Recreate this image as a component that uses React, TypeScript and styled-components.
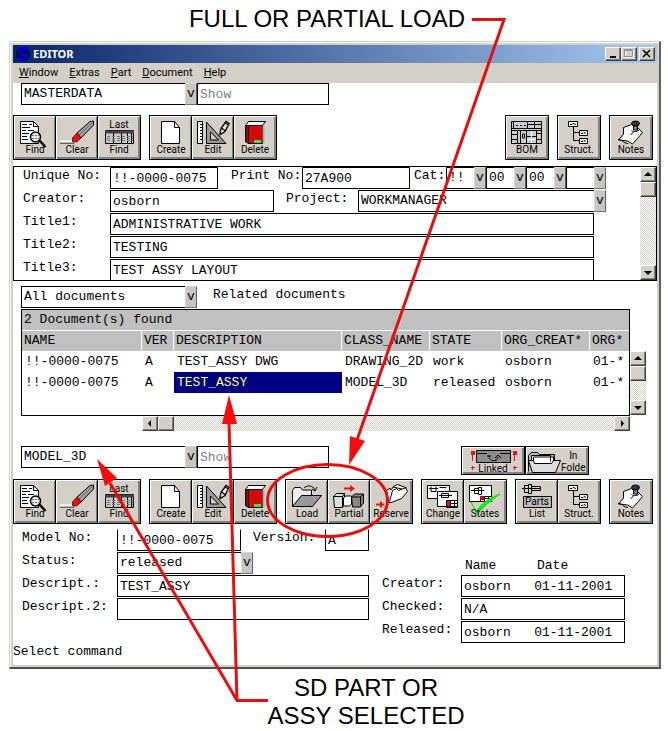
import React, { useId } from 'react';
import styled, { createGlobalStyle, css } from 'styled-components';

const face = '#d4d0c8';
const mono = '"Liberation Mono", "Courier New", monospace';
const ui = 'Roboto, Tahoma, sans-serif';

const GlobalStyle = createGlobalStyle`
  * { box-sizing: border-box; }
  body { margin: 0; background: #fff; color: #000; font: 13px/16px ${mono}; }
  button, input, select { margin: 0; padding: 0; font: inherit; color: inherit; border-radius: 0; }
`;

const Page = styled.main`
  position: relative;
  padding: 0 7px 0 9px;
`;

const Callout = styled.h1<{ $foot?: boolean }>`
  margin: 0;
  padding: ${(p) => (p.$foot ? '5px 0 0 62px' : '5px 16px 8px 0')};
  font: 24px/28px "Liberation Sans", Arial, sans-serif;
  text-align: center;
`;

const Frame = styled.section`
  border: 1px solid ${face};
  border-right: 2px solid #606060;
  border-bottom: 2px solid #505050;
  box-shadow: inset 1px 1px 0 #fff;
  padding: 3px 2px 2px 3px;
  background: ${face};
`;

const TitleBar = styled.header`
  display: flex;
  align-items: center;
  height: 18px;
  padding: 0 2px 0 3px;
  background: linear-gradient(90deg, #0a246a, #a6caf0);
`;

const Title = styled.h2`
  flex: 1;
  margin: 0 0 0 3px;
  color: #fff;
  font: bold 11px/16px "Noto Sans", Tahoma, sans-serif;
`;

const bevel = css`
  background: ${face};
  border: 1px solid;
  border-color: #fff #404040 #404040 #fff;
  box-shadow: inset -1px -1px 0 #808080;
`;

const CaptionButton = styled.button<{ $apart?: boolean }>`
  ${bevel}
  display: flex;
  width: 16px;
  height: 14px;
  margin-left: ${(p) => (p.$apart ? 2 : 0)}px;
`;

const MenuBar = styled.nav`
  display: flex;
  gap: 11px;
  height: 20px;
  padding-left: 6px;
`;

const MenuItem = styled.button`
  border: 0;
  background: none;
  font: 11px/20px ${ui};
  &::first-letter { text-decoration: underline; }
`;

const Client = styled.div`
  background: #fff;
  padding-bottom: 5px;
`;

const Bar = styled.div<{ $top?: number }>`
  display: flex;
  align-items: flex-start;
  padding-left: 8px;
  margin-top: ${(p) => p.$top ?? 0}px;
`;

const fieldBox = css`
  height: 22px;
  border: 1px solid #000;
  background: #fff;
  padding: 0 0 0 2px;
  outline-offset: -2px;
`;

const Field = styled.input<{ $w?: number; $end?: number; $openTop?: boolean }>`
  ${fieldBox}
  min-width: 0;
  ${(p) => (p.$w ? `width: ${p.$w}px;` : 'flex: 1;')}
  margin-right: ${(p) => p.$end ?? 0}px;
  ${(p) => p.$openTop && 'border-top-color: transparent;'}
  &::placeholder { color: #808080; opacity: 1; }
`;

const ComboWrap = styled.span<{ $w?: number }>`
  display: grid;
  ${(p) => (p.$w ? `width: ${p.$w}px;` : 'flex: 1;')}
`;

const ComboSelect = styled.select`
  ${fieldBox}
  grid-area: 1 / 1;
  width: 100%;
  appearance: none;
`;

const ComboMark = styled.span`
  grid-area: 1 / 1;
  justify-self: end;
  width: 12px;
  height: 22px;
  background: #c8c6c0;
  border: 1px solid;
  border-color: #d8d8d8 #606060 #707070 #d8d8d8;
  text-align: center;
  line-height: 19px;
  pointer-events: none;
`;

function Combo({ value, label, w, id }: { value: string; label?: string; w?: number; id?: string }) {
  return (
    <ComboWrap $w={w}>
      <ComboSelect id={id} aria-label={label} defaultValue={value}>
        <option>{value}</option>
      </ComboSelect>
      <ComboMark aria-hidden>v</ComboMark>
    </ComboWrap>
  );
}

const Toolbar = styled.div<{ $top: number }>`
  display: flex;
  gap: 8px;
  margin-top: ${(p) => p.$top}px;
  padding-right: 4px;
`;

const Group = styled.div<{ $push?: boolean }>`
  display: flex;
  margin-left: ${(p) => (p.$push ? 'auto' : '0')};
`;

const ToolButton = styled.button<{ $wide?: boolean; $row?: boolean }>`
  display: flex;
  flex: none;
  flex-direction: ${(p) => (p.$row ? 'row' : 'column')};
  align-items: center;
  width: ${(p) => (p.$wide ? 64 : 44)}px;
  height: ${(p) => (p.$wide ? 29 : 45)}px;
  padding: ${(p) => (p.$wide ? 1 : 3)}px 1px 0;
  overflow: hidden;
  border: 1px solid #000;
  background: ${face};
  box-shadow: inset 1px 1px 0 #fff, inset -2px -2px 0 #808080;
  font: 10px/12px ${ui};
  &:not(:first-child) { margin-left: ${(p) => (p.$wide ? 0 : -2)}px; }
  svg { flex: none; overflow: visible; }
`;

const Glyph = ({ children, w = 40, h = 25 }: { children: React.ReactNode; w?: number; h?: number }) => (
  <svg width={w} height={h} viewBox={`0 0 ${w} ${h}`} fill="none" stroke="#000" strokeWidth="1" aria-hidden>
    {children}
  </svg>
);

const SmallText = styled.text`
  font: 10px ${ui};
  fill: #000;
  stroke: none;
  text-anchor: middle;
`;

const icons: Record<string, React.ReactNode> = {
  Find: (
    <>
      <path d="M5.500 2.500h13l5 5v17h-18z" fill="#fff" />
      <path d="M18.500 2.500v5h5" />
      <path d="M7 5.500h5m2 0h3M7 8.500h8M7 11.500h4m2 0h6M7 14.500h7M7 17.500h5M7 20.500h6" />
      <circle cx="20.500" cy="18" r="5" fill="#e8e8e8" strokeWidth="1.500" />
      <path d="M17 16.500h7m-7 3h7" stroke="#777" strokeDasharray="2 1" />
      <path d="M24.500 21.500l6 6.500" strokeWidth="2.500" />
    </>
  ),
  Clear: (
    <>
      <path d="M3 24h14" />
      <path d="M3 22.500h13" stroke="#fff" strokeWidth="2" />
      <path d="M20 14l13-11.500 3.500-.500v4L24 19z" fill="#a0a0a0" />
      <path d="M22 16L35 4" stroke="#666" />
      <path d="M15.500 19l4.500-5 4 5-4.500 4-4-.500z" fill="#e8120c" stroke="#7a1010" />
    </>
  ),
  'Last Find': (
    <>
      <SmallText x="20" y="9">Last</SmallText>
      <path d="M6.500 11.500h28v13h-28z" fill="#c8c8c8" />
      <path d="M6 13h29" stroke="#444" strokeWidth="3" />
      <path d="M14.500 14v10M22.500 14v10M28.500 14v10M32.500 14v10" />
      <path d="M8 17.500h26M8 19.500h26M8 21.500h26" strokeDasharray="3 2" stroke="#777" />
    </>
  ),
  Create: (
    <>
      <path d="M10.500 2.500h13l5 6v16h-18z" fill="#fff" />
      <path d="M23.500 2.500v6h5" />
    </>
  ),
  Edit: (
    <>
      <path d="M4.500 2.500h5v22h-5z" fill="#fff" />
      <path d="M7 5.500h3M7 8.500h3M7 11.500h3M7 14.500h3M7 17.500h3M7 20.500h3" />
      <path d="M13.500 3v21.500h19.500zM17.500 13v8h8z" fill="#999" fillRule="evenodd" />
      <path d="M27 14.500l1-5 5-7 3 2-4 8-5 3zM28.500 9l4 3M32 4l3.500 2" fill="#eee" strokeWidth="1.300" />
    </>
  ),
  Delete: (
    <>
      <path d="M10.500 6.500l3-4h17l-3 4z" fill="#fff" />
      <path d="M10.500 6.500h3v18l-3-2z" fill="#8a0d0d" />
      <path d="M13.500 6.500h14v18h-14z" fill="#d40a0a" />
      <path d="M28.500 7v17" stroke="#aaa" strokeWidth="2" />
      <path d="M19 22.500h7" stroke="#45e045" strokeWidth="3" />
    </>
  ),
  BOM: (
    <>
      <path d="M4.500 2.500h30v22h-30z" fill="#ccc" />
      <path d="M6.500 2v7.500M20.500 2v7.500M4 9.500h31M4 11.500h31M27.500 2v7.500M21 5.500h14M10.500 11v14M4 15.500h6M4 20.500h6M13.500 11v14M19.500 11v14M29.500 11v14M19 17.500h10M30 14.500h5M30 20.500h5" />
      <path d="M15.500 15h2v4h-2z" />
      <path d="M24.500 12v12M20 20.500h9" stroke="#fff" />
      <path d="M9 6.500h10" strokeDasharray="2 2" />
    </>
  ),
  'Struct.': (
    <>
      <path d="M14.500 8v13.500h6M14.500 13.500h6" />
      <path d="M9.500 2.500h9v5h-9zM20.500 11.500h8v5h-8zM20.500 19.500h8v5h-8z" fill="#fff" />
      <path d="M11 5.500h2l1-1 3 1M22 14.500h2l1-1 2 1M22 22.500h2l1-1 2 1" />
    </>
  ),
  Notes: (
    <>
      <path d="M12.500 8.500l8-3 5 2 6 6-5 6-5 5.500-5-3-9-1 5-6z" fill="#fff" />
      <path d="M7 20.500c4-1 5 4 10 4" />
      <ellipse cx="24.500" cy="4.500" rx="4" ry="2.500" fill="#333" />
      <path d="M22.500 7h4v4h-4z" fill="#888" />
      <path d="M20.500 11.500c2 2 7 1 8-1M22.500 13l-3 3" />
    </>
  ),
  Load: (
    <>
      <path d="M5.500 23.500v-16l2-3h6l2 2.500h9v5" fill="#eee" />
      <path d="M5.500 23.500l9-11h20l-9 11z" fill="#999" />
      <path d="M17 5c3-3 9-3 11 2m-3-1l3 2 2-4" />
    </>
  ),
  Partial: (
    <>
      <path d="M15 4.500h6v-2.500l5 3.500-5 3.500v-2.500h-6z" fill="#e8120c" stroke="none" />
      <path d="M4.500 13.500l3-3h8v9l-2 5h-8zM4.500 13.500h9v11M13.500 13.500l2-3" fill="#ddd" />
      <path d="M14.500 15l2-2h6v8l-2 2h-6z" fill="#fff" />
      <path d="M22.500 14l3-3h9v9l-3 4h-8zM22.500 14h9v10M31.500 14l3-3" fill="#888" />
    </>
  ),
  Reserve: (
    <>
      <path d="M17.500 19.500l-2-12 3-2 2 1 2-3 4-2 8 3 2 4-6 7-10 4z" fill="#fff" />
      <path d="M18.500 18.500l3-11 4-2 2 2 8-3M20 7l-2-2M22 4l9 2" />
      <path d="M5 21.500h8m-3-3v6" stroke="#e8120c" strokeWidth="2" />
    </>
  ),
  Change: (
    <>
      <path d="M4.500 2.500h22v13h-22z" fill="#fff" />
      <path d="M6 5.500h9m-7-2v5h5v-5M16.500 4.500h7" />
      <path d="M14.500 8.500h20v15h-20z" fill="#fff" />
      <path d="M16 12.500h13M18.500 10.500h7v4h-7z" />
      <path d="M23.500 17.500h11v7h-11zM27.500 17v7M31.500 17v7M23 20.500h11" />
      <path d="M24 18h3v5h-3z" fill="#e8120c" stroke="none" />
    </>
  ),
  States: (
    <>
      <path d="M4.500 2.500h22v16h-22z" fill="#fff" />
      <path d="M6 7.500h13M9.500 5.500h4v5h-4zM13.500 4.500h3v7h-3zM15.500 13.500h11v5h-11zM19.500 13v5M23.500 13v5M15 15.500h11" />
      <path d="M15 13h4v4h-4z" fill="#c01010" stroke="none" />
      <path d="M6 19l5 9Q20 16 35 11Q22 20 12 31z" fill="#19e619" stroke="#19e619" />
    </>
  ),
  'List|Parts': (
    <>
      <path d="M5 5.500h19M7.500 2.500h4v7h-4zM11.500 1.500h3v9h-3zM14.500 3.500h9v4h-9z" />
      <path d="M6.500 13.500h28v11h-28z" fill="#bbb" />
      <SmallText x="20" y="22">Parts</SmallText>
    </>
  ),
};

function Tool({ name }: { name: string }) {
  const label = name === 'Last Find' ? 'Find' : name.split('|')[0];
  return (
    <ToolButton type="button">
      <Glyph>{icons[name]}</Glyph>
      {label}
    </ToolButton>
  );
}

const Tools = ({ names, push }: { names: string[]; push?: boolean }) => (
  <Group $push={push}>
    {names.map((n) => (
      <Tool key={n} name={n} />
    ))}
  </Group>
);

const FolderText = styled.span`
  display: grid;
  grid-auto-rows: 12px;
  justify-items: center;
  padding-top: 1px;
`;

const Pane = styled.form`
  display: flex;
  height: 115px;
  margin-top: 6px;
  overflow: hidden;
  border: 1px solid #000;
`;

const PaneRows = styled.div`
  flex: 1;
  display: grid;
  grid-auto-rows: 22px;
  gap: 1px;
  padding: 0 34px 0 9px;
`;

const Row = styled.div`
  display: flex;
`;

const Label = styled.label<{ $w: number; $start?: number }>`
  flex: none;
  width: ${(p) => p.$w}px;
  margin-left: ${(p) => p.$start ?? 0}px;
  line-height: 17px;
  white-space: nowrap;
`;

interface FieldProps {
  label: string;
  value: string;
  lw: number;
  start?: number;
  w?: number;
  end?: number;
  openTop?: boolean;
}

function Labeled({ label, value, lw, start, w, end, openTop }: FieldProps) {
  const id = useId();
  return (
    <>
      <Label htmlFor={id} $w={lw} $start={start}>{label}</Label>
      <Field id={id} defaultValue={value} $w={w} $end={end} $openTop={openTop} />
    </>
  );
}

const ScrollTrack = styled.div<{ $across?: boolean }>`
  display: flex;
  flex-direction: ${(p) => (p.$across ? 'row' : 'column')};
  ${(p) => (p.$across ? 'height: 15px; margin: 0 16px 0 121px;' : 'width: 16px;')}
  background: repeating-conic-gradient(${face} 0 25%, #fff 0 50%) 0 0 / 2px 2px;
`;

const ScrollButton = styled.button<{ $last?: boolean }>`
  ${bevel}
  display: flex;
  flex: none;
  align-items: center;
  justify-content: center;
  width: 16px;
  height: 15px;
  ${(p) => p.$last && 'margin: auto 0 0 auto;'}
`;

const arrows = { up: 'M0 5l4-4 4 4z', down: 'M0 2l4 4 4-4z', left: 'M5 0v7l-3-3.500z', right: 'M3 0v7l3-3.500z' };

const Arrow = ({ dir }: { dir: keyof typeof arrows }) => (
  <svg width="8" height="7" aria-hidden>
    <path d={arrows[dir]} />
  </svg>
);

function Scroller({ across }: { across?: boolean }) {
  return (
    <ScrollTrack $across={across}>
      <ScrollButton type="button" aria-label={across ? 'Scroll left' : 'Scroll up'}>
        <Arrow dir={across ? 'left' : 'up'} />
      </ScrollButton>
      <ScrollButton type="button" aria-label="Scroll position" />
      <ScrollButton type="button" $last aria-label={across ? 'Scroll right' : 'Scroll down'}>
        <Arrow dir={across ? 'right' : 'down'} />
      </ScrollButton>
    </ScrollTrack>
  );
}

const Results = styled.div`
  margin-top: 1px;
  padding: 0 11px 0 8px;
`;

const ResultsTop = styled.div`
  display: flex;
`;

const ListBox = styled.div`
  flex: 1;
  min-width: 0;
  height: 107px;
  overflow: hidden;
  border: 1px solid #000;
`;

const SideScroll = styled.div`
  display: flex;
  padding: 42px 0 1px;
`;

const Table = styled.table`
  width: 100%;
  table-layout: fixed;
  border-collapse: separate;
  border-spacing: 0;
  white-space: nowrap;
  text-align: left;
  caption { height: 21px; padding: 2px; background: #c0c0c0; border-bottom: 1px solid #fff; text-align: left; }
  th { height: 20px; padding: 0 0 0 2px; background: #c0c0c0; border-right: 1px solid #fff; font-weight: normal; }
  th:last-child { border-right: 0; }
`;

const Col = styled.col<{ $w?: number }>`
  ${(p) => p.$w && `width: ${p.$w}px;`}
`;

const Cell = styled.td<{ $on: boolean }>`
  height: 21px;
  padding: 1px 0 0 3px;
  ${(p) => p.$on && 'background: #000080; color: #ffff80;'}
`;

const docs = [
  ['!!-0000-0075', 'A', 'TEST_ASSY DWG', 'DRAWING_2D', 'work', 'osborn', '01-*'],
  ['!!-0000-0075', 'A', 'TEST_ASSY', 'MODEL_3D', 'released', 'osborn', '01-*'],
];

const ModelBar = styled(Bar)`
  margin-top: 15px;
  padding-right: 68px;
`;

const Details = styled.form`
  display: flex;
  gap: 13px;
  margin-top: 5px;
  padding-left: 9px;
`;

const Stack = styled.div<{ $w: number; $top?: number }>`
  display: grid;
  grid-template-columns: minmax(0, 1fr);
  grid-auto-rows: 22px;
  align-content: start;
  gap: 1px;
  width: ${(p) => p.$w}px;
  padding-top: ${(p) => p.$top ?? 0}px;
`;

const Heads = styled.div`
  display: grid;
  grid-template-columns: 72px 1fr;
  padding: 6px 0 0 83px;
`;

const Prompt = styled.output`
  display: block;
  padding-top: 1px;
`;

const Overlay = styled.svg`
  position: absolute;
  left: 0;
  top: 0;
  pointer-events: none;
`;

export default function App() {
  const statusId = useId();
  const projectId = useId();
  return (
    <Page>
      <GlobalStyle />
      <Callout>FULL OR PARTIAL LOAD</Callout>
      <Frame>
        <TitleBar>
          <svg width="14" height="16" aria-hidden>
            <ellipse cx="7" cy="8" rx="7" ry="7" fill="#04083c" />
            <path d="M12 3C7 1 2 4 4 7s8 1 7 4-6 3-9 1" fill="none" stroke="#0000d8" strokeWidth="3" />
          </svg>
          <Title>EDITOR</Title>
          <CaptionButton type="button" aria-label="Minimize">
            <svg width="14" height="12" aria-hidden><path d="M4 8h6v2H4z" /></svg>
          </CaptionButton>
          <CaptionButton type="button" aria-label="Maximize">
            <svg width="14" height="12" fill="none" aria-hidden>
              <path d="M3.500 2.500h8v7h-8z" stroke="#fff" />
              <path d="M2.500 1.500h8v7h-8zM2 2.500h9" stroke="#909090" />
            </svg>
          </CaptionButton>
          <CaptionButton type="button" $apart aria-label="Close">
            <svg width="14" height="12" aria-hidden><path d="M3 2l7 7M10 2l-7 7" stroke="#000" strokeWidth="1.500" /></svg>
          </CaptionButton>
        </TitleBar>
        <MenuBar>
          {['Window', 'Extras', 'Part', 'Document', 'Help'].map((m) => (
            <MenuItem key={m} type="button">{m}</MenuItem>
          ))}
        </MenuBar>
        <Client>
          <Bar>
            <Combo value="MASTERDATA" label="Data class" w={176} />
            <Field $w={132} placeholder="Show" aria-label="Show master data" />
          </Bar>
          <Toolbar $top={10}>
            <Tools names={['Find', 'Clear', 'Last Find']} />
            <Tools names={['Create', 'Edit', 'Delete']} />
            <Tools names={['BOM']} push />
            <Tools names={['Struct.']} />
            <Tools names={['Notes']} />
          </Toolbar>
          <Pane>
            <PaneRows>
              <Row>
                <Labeled label="Unique No:" value="!!-0000-0075" lw={87} w={108} />
                <Labeled label="Print No:" value="27A900" lw={71} start={13} w={108} />
                <Label as="span" $w={32} $start={4}>Cat:</Label>
                <Combo value="!!" label="Category 1" w={40} />
                <Combo value="00" label="Category 2" w={40} />
                <Combo value="00" label="Category 3" w={40} />
                <Combo value="" label="Category 4" w={40} />
              </Row>
              <Row>
                <Labeled label="Creator:" value="osborn" lw={87} w={164} />
                <Label htmlFor={projectId} $w={72} $start={12}>Project:</Label>
                <Combo id={projectId} value="WORKMANAGER" />
              </Row>
              <Row><Labeled label="Title1:" value="ADMINISTRATIVE WORK" lw={87} end={12} /></Row>
              <Row><Labeled label="Title2:" value="TESTING" lw={87} end={12} /></Row>
              <Row><Labeled label="Title3:" value="TEST ASSY LAYOUT" lw={87} end={12} /></Row>
            </PaneRows>
            <Scroller />
          </Pane>
          <Bar $top={5}>
            <Combo value="All documents" label="Document filter" w={176} />
            <Label as="span" $w={140} $start={16}>Related documents</Label>
          </Bar>
          <Results>
            <ResultsTop>
              <ListBox>
                <Table>
                  <caption>2 Document(s) found</caption>
                  <colgroup>
                    {[120, 32, 168, 88, 72, 88].map((w, i) => <Col key={i} $w={w} />)}
                    <Col />
                  </colgroup>
                  <thead>
                    <tr>
                      {['NAME', 'VER', 'DESCRIPTION', 'CLASS_NAME', 'STATE', 'ORG_CREAT*', 'ORG*'].map((h) => (
                        <th key={h} scope="col">{h}</th>
                      ))}
                    </tr>
                  </thead>
                  <tbody>
                    {docs.map((d, r) => (
                      <tr key={r}>
                        {d.map((c, i) => <Cell key={i} $on={r === 1 && i === 2}>{c}</Cell>)}
                      </tr>
                    ))}
                  </tbody>
                </Table>
              </ListBox>
              <SideScroll><Scroller /></SideScroll>
            </ResultsTop>
            <Scroller across />
          </Results>
          <ModelBar>
            <Combo value="MODEL_3D" label="Model class" w={176} />
            <Field $w={132} placeholder="Show" aria-label="Show models" />
            <Group $push>
              <ToolButton type="button" $wide>
                <Glyph w={60} h={15}>
                  <path d="M13.500 2.500h34v12h-34z" fill="#8c8c8c" />
                  <path d="M13 5.500h11m13 0h11" />
                  <path d="M26 8c0 6 9 6 9 1m-3 1l3-3 3 3M24 8h4" />
                  <path d="M9.500 4v9M51.500 4v9M8 19.500h4M9.500 18v4M50 19.500h4M51.500 18v4" stroke="#e8120c" />
                  <path d="M8 3h4v4h-4zM50 3h4v4h-4z" fill="#e8120c" stroke="none" />
                </Glyph>
                Linked
              </ToolButton>
              <ToolButton type="button" $wide $row>
                <Glyph w={34}>
                  <path d="M1.500 22.500v-16l3-3h6l2 2h15v9" fill="#bbb" />
                  <path d="M4.500 14.500v-8h19v6M6.500 14v-6h20v6" fill="#fff" />
                  <path d="M1.500 11.500l4 12h23l5-12h-7l-2 3h-17l-1-3z" fill="#ddd" />
                </Glyph>
                <FolderText><span>In</span><span>Folde</span></FolderText>
              </ToolButton>
            </Group>
          </ModelBar>
          <Toolbar $top={4}>
            <Tools names={['Find', 'Clear', 'Last Find']} />
            <Tools names={['Create', 'Edit', 'Delete']} />
            <Tools names={['Load', 'Partial', 'Reserve']} />
            <Tools names={['Change', 'States']} />
            <Tools names={['List|Parts', 'Struct.']} />
            <Tools names={['Notes']} />
          </Toolbar>
          <Details>
            <Stack $w={347}>
              <Row>
                <Labeled label="Model No:" value="!!-0000-0075" lw={95} w={124} openTop />
                <Labeled label="Version:" value="A" lw={72} start={12} w={44} openTop />
              </Row>
              <Row>
                <Label htmlFor={statusId} $w={95}>Status:</Label>
                <Combo id={statusId} value="released" w={136} />
              </Row>
              <Row><Labeled label="Descript.:" value="TEST_ASSY" lw={95} /></Row>
              <Row><Labeled label="Descript.2:" value="" lw={95} /></Row>
            </Stack>
            <Stack $w={243} $top={23}>
              <Heads><span>Name</span><span>Date</span></Heads>
              <Row><Labeled label="Creator:" value="osborn   01-11-2001" lw={79} /></Row>
              <Row><Labeled label="Checked:" value="N/A" lw={79} /></Row>
              <Row><Labeled label="Released:" value="osborn   01-11-2001" lw={79} /></Row>
            </Stack>
          </Details>
          <Prompt>Select command</Prompt>
        </Client>
      </Frame>
      <Callout as="p" $foot>SD PART OR<br />ASSY SELECTED</Callout>
      <Overlay width="668" height="731" fill="none" stroke="#e60f0f" strokeWidth="3" aria-hidden>
        <path d="M472 19.500h32L357 440M268 700.500h-31L110 483M237 700L229 423" />
        <ellipse cx="327.500" cy="500.500" rx="60" ry="36" />
        <path d="M349 465l1-29 15 5zM229 395l-7 29h15zM97 459l8 27 12-8z" fill="#fa0a0a" stroke="none" />
      </Overlay>
    </Page>
  );
}
